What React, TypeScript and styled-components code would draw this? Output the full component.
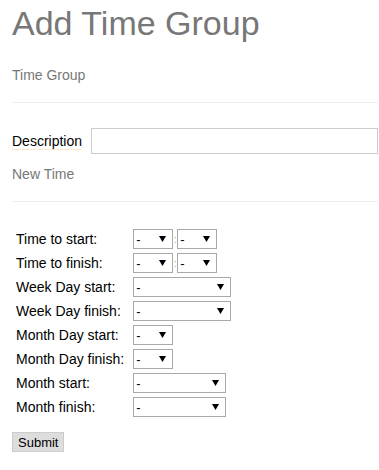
import React from 'react';
import styled, { createGlobalStyle } from 'styled-components';

const GlobalStyle = createGlobalStyle`
  body {
    margin: 0;
    background: #fff;
    font-family: "Liberation Sans", Arial, sans-serif;
    font-size: 14px;
    color: #333;
  }
`;

const Page = styled.div`
  padding: 0 1px 0 12px;
`;

const Title = styled.h1`
  margin: 4px 0 0;
  font-size: 34px;
  font-weight: 400;
  line-height: 38px;
  color: #777;
`;

const SectionTitle = styled.div`
  margin-top: 25px;
  font-size: 14px;
  line-height: 17px;
  color: #777;
`;

const Rule = styled.hr`
  margin: 18px 0 0;
  border: 0;
  border-top: 1px solid #eee;
`;

const FieldRow = styled.div`
  display: flex;
  align-items: center;
  gap: 9px;
  margin-top: 25px;
`;

const Label = styled.label`
  color: #000;
  border-bottom: 1px solid #fde9cf;
  line-height: 16px;
`;

const TextInput = styled.input`
  flex: 1;
  height: 26px;
  box-sizing: border-box;
  border: 1px solid #ccc;
  padding: 2px 6px;
  font: inherit;
`;

const SubTitle = styled(SectionTitle)`
  margin-top: 12px;
`;

const Table = styled.table`
  margin-top: 24px;
  border-spacing: 2px;
  margin-left: -2px;
  font-size: 14px;
  color: #000;
`;

const LabelCell = styled.td`
  padding: 1px 6px 1px 4px;
  white-space: nowrap;
  height: 20px;
`;

const Cell = styled.td`
  padding: 1px 1px;
  white-space: nowrap;
`;

const Select = styled.select<{ $w: number }>`
  width: ${({ $w }) => $w}px;
  height: 20px;
  box-sizing: border-box;
  border: 1px solid #a9a9a9;
  background: #fff;
  font-family: "Liberation Sans", Arial, sans-serif;
  font-size: 13px;
  padding: 0 2px;
  appearance: none;
  background-image: url("data:image/svg+xml,%3Csvg xmlns='http://www.w3.org/2000/svg' width='7' height='8'%3E%3Cpath d='M0 1h7L3.5 7z' fill='%23000'/%3E%3C/svg%3E");
  background-repeat: no-repeat;
  background-position: right 6px center;
  color: #000;
  vertical-align: middle;
`;

const Colon = styled.span`
  display: inline-block;
  width: 4px;
  text-align: center;
  color: #e8a050;
  font-size: 11px;
  vertical-align: middle;
`;

const SubmitButton = styled.button`
  margin-top: 12px;
  height: 20px;
  padding: 0 5px;
  background: #ddd;
  border: 1px solid #ccc;
  font-family: "Liberation Sans", Arial, sans-serif;
  font-size: 13px;
  color: #000;
`;

type Row = { label: string; kind: 'time' | 'wide' | 'small' | 'month' };

const rows: Row[] = [
  { label: 'Time to start:', kind: 'time' },
  { label: 'Time to finish:', kind: 'time' },
  { label: 'Week Day start:', kind: 'wide' },
  { label: 'Week Day finish:', kind: 'wide' },
  { label: 'Month Day start:', kind: 'small' },
  { label: 'Month Day finish:', kind: 'small' },
  { label: 'Month start:', kind: 'month' },
  { label: 'Month finish:', kind: 'month' },
];

const Dash = ({ w }: { w: number }) => (
  <Select $w={w} defaultValue="-">
    <option value="-">-</option>
  </Select>
);

const App = () => {
  return (
    <Page>
      <GlobalStyle />
      <Title>Add Time Group</Title>
      <SectionTitle>Time Group</SectionTitle>
      <Rule />
      <FieldRow>
        <Label>Description</Label>
        <TextInput type="text" />
      </FieldRow>
      <SubTitle>New Time</SubTitle>
      <Rule />
      <Table>
        <tbody>
          {rows.map((r) => (
            <tr key={r.label}>
              <LabelCell>{r.label}</LabelCell>
              <Cell>
                {r.kind === 'time' && (
                  <>
                    <Dash w={40} />
                    <Colon>:</Colon>
                    <Dash w={40} />
                  </>
                )}
                {r.kind === 'wide' && <Dash w={98} />}
                {r.kind === 'small' && <Dash w={40} />}
                {r.kind === 'month' && <Dash w={93} />}
              </Cell>
            </tr>
          ))}
        </tbody>
      </Table>
      <SubmitButton type="button">Submit</SubmitButton>
    </Page>
  );
};

export default App;
